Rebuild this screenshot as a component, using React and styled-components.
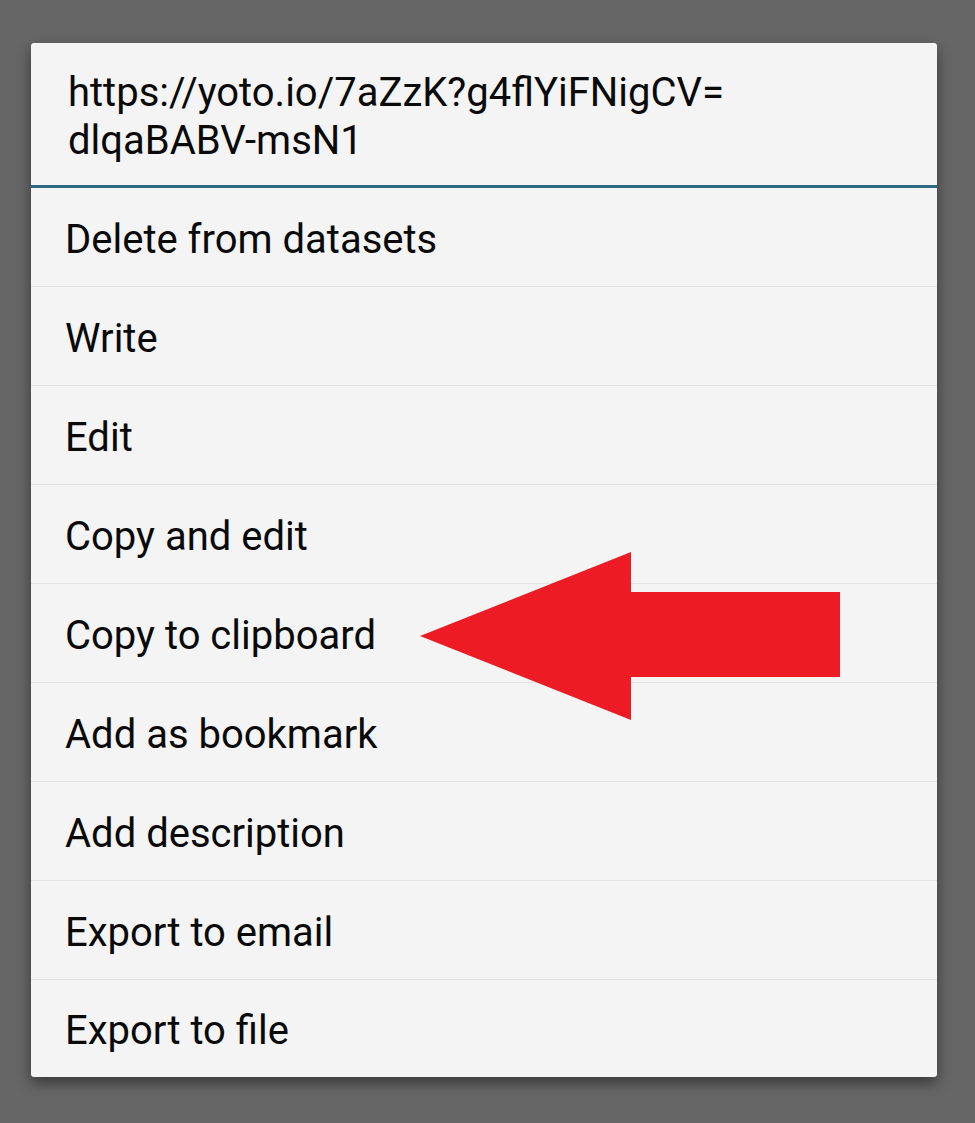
import React from "react";
import styled, { createGlobalStyle } from "styled-components";

const GlobalStyle = createGlobalStyle`
  html, body {
    margin: 0;
    padding: 0;
    background: #666666;
  }
  body {
    font-family: Roboto, "Noto Sans", sans-serif;
  }
`;

const items = [
  "Delete from datasets",
  "Write",
  "Edit",
  "Copy and edit",
  "Copy to clipboard",
  "Add as bookmark",
  "Add description",
  "Export to email",
  "Export to file",
];

export default function App() {
  return (
    <Screen>
      <GlobalStyle />
      <Dialog>
        <Title>
          https://yoto.io/7aZzK?g4flYiFNigCV=
          <br />
          dlqaBABV-msN1
        </Title>
        <List>
          {items.map((label, i) => (
            <Item key={label} last={i === items.length - 1}>
              {label}
            </Item>
          ))}
        </List>
        <Arrow viewBox="0 0 420 168" aria-hidden="true">
          <polygon points="0,84 211,0 211,40 420,40 420,125 211,125 211,168" fill="#ed1c24" />
        </Arrow>
      </Dialog>
    </Screen>
  );
}

const Screen = styled.div`
  width: 975px;
  height: 1123px;
  box-sizing: border-box;
  padding: 43px 38px 0 31px;
  background: #666666;
`;

const Dialog = styled.div`
  position: relative;
  width: 906px;
  background: #f4f4f4;
  border-radius: 3px;
  box-shadow: 0 6px 14px rgba(0, 0, 0, 0.45);
  overflow: hidden;
`;

const Title = styled.div`
  height: 145px;
  box-sizing: border-box;
  padding: 26px 37px 0 37px;
  border-bottom: 3px solid #2e6b80;
  font-size: 40px;
  line-height: 48px;
  color: #0a0a0a;
`;

const List = styled.div`
  display: flex;
  flex-direction: column;
`;

const Item = styled.div`
  display: flex;
  align-items: center;
  height: ${(p) => (p.last ? "97px" : "99px")};
  box-sizing: border-box;
  padding-left: 34px;
  padding-top: 4px;
  border-bottom: ${(p) => (p.last ? "none" : "1px solid #e2e2e2")};
  font-size: 40px;
  color: #0a0a0a;
`;

const Arrow = styled.svg`
  position: absolute;
  left: 389px;
  top: 509px;
  width: 420px;
  height: 168px;
`;
